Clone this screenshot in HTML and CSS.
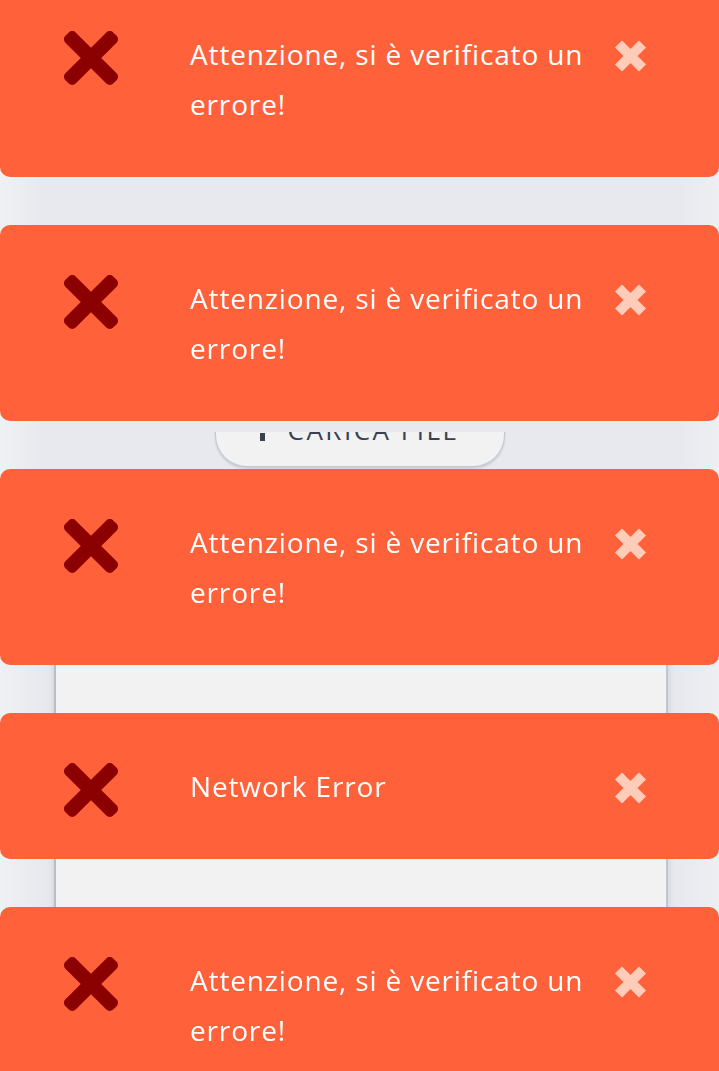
FILE: index.html
```html
<!DOCTYPE html>
<html lang="it">
<head>
  <meta charset="UTF-8">
  <meta name="viewport" content="width=device-width, initial-scale=1.0">
  <title>Carica file</title>
  <link rel="stylesheet" href="styles.css">
</head>

<body>
<div class="page">
  <div class="upload-clip">
    <div class="upload">
      <span class="upload-icon"></span>
      <span class="upload-text">CARICA FILE</span>
    </div>
  </div>
  <div class="panel"></div>
</div>

<div class="toasts">
  <div class="toast">
    <svg class="toast-icon" viewBox="0 80 352 352"><path d="M242.72 256l100.07-100.07c12.28-12.28 12.28-32.19 0-44.48l-22.24-22.24c-12.28-12.28-32.19-12.28-44.48 0L176 189.28 75.93 89.21c-12.28-12.28-32.19-12.28-44.480 0L9.21 111.45c-12.28 12.28-12.28 32.19 0 44.48L109.28 256 9.21 356.07c-12.28 12.28-12.28 32.19 0 44.48l22.24 22.24c12.28 12.28 32.2 12.28 44.48 0L176 322.72l100.07 100.07c12.28 12.28 32.2 12.28 44.48 0l22.24-22.24c12.28-12.28 12.28-32.19 0-44.48L242.72 256z"/></svg>
    <div class="toast-text">Attenzione, si è verificato un errore!</div>
    <svg class="toast-close" viewBox="0 0 32 32"><path d="M4 4L28 28M28 4L4 28"/></svg>
  </div>
  <div class="toast">
    <svg class="toast-icon" viewBox="0 80 352 352"><path d="M242.72 256l100.07-100.07c12.28-12.28 12.28-32.19 0-44.48l-22.24-22.24c-12.28-12.28-32.19-12.28-44.48 0L176 189.28 75.93 89.21c-12.28-12.28-32.19-12.28-44.480 0L9.21 111.45c-12.28 12.28-12.28 32.19 0 44.48L109.28 256 9.21 356.07c-12.28 12.28-12.28 32.19 0 44.48l22.24 22.24c12.28 12.28 32.2 12.28 44.48 0L176 322.72l100.07 100.07c12.28 12.28 32.2 12.28 44.48 0l22.24-22.24c12.28-12.28 12.28-32.19 0-44.48L242.72 256z"/></svg>
    <div class="toast-text">Attenzione, si è verificato un errore!</div>
    <svg class="toast-close" viewBox="0 0 32 32"><path d="M4 4L28 28M28 4L4 28"/></svg>
  </div>
  <div class="toast">
    <svg class="toast-icon" viewBox="0 80 352 352"><path d="M242.72 256l100.07-100.07c12.28-12.28 12.28-32.19 0-44.48l-22.24-22.24c-12.28-12.28-32.19-12.28-44.48 0L176 189.28 75.93 89.21c-12.28-12.28-32.19-12.28-44.480 0L9.21 111.45c-12.28 12.28-12.28 32.19 0 44.48L109.28 256 9.21 356.07c-12.28 12.28-12.28 32.19 0 44.48l22.24 22.24c12.28 12.28 32.2 12.28 44.48 0L176 322.72l100.07 100.07c12.28 12.28 32.2 12.28 44.48 0l22.24-22.24c12.28-12.28 12.28-32.19 0-44.48L242.72 256z"/></svg>
    <div class="toast-text">Attenzione, si è verificato un errore!</div>
    <svg class="toast-close" viewBox="0 0 32 32"><path d="M4 4L28 28M28 4L4 28"/></svg>
  </div>
  <div class="toast">
    <svg class="toast-icon" viewBox="0 80 352 352"><path d="M242.72 256l100.07-100.07c12.28-12.28 12.28-32.19 0-44.48l-22.24-22.24c-12.28-12.28-32.19-12.28-44.48 0L176 189.28 75.93 89.21c-12.28-12.28-32.19-12.28-44.480 0L9.21 111.45c-12.28 12.28-12.28 32.19 0 44.48L109.28 256 9.21 356.07c-12.28 12.28-12.28 32.19 0 44.48l22.24 22.24c12.28 12.28 32.2 12.28 44.48 0L176 322.72l100.07 100.07c12.28 12.28 32.2 12.28 44.48 0l22.24-22.24c12.28-12.28 12.28-32.19 0-44.48L242.72 256z"/></svg>
    <div class="toast-text">Network Error</div>
    <svg class="toast-close" viewBox="0 0 32 32"><path d="M4 4L28 28M28 4L4 28"/></svg>
  </div>
  <div class="toast">
    <svg class="toast-icon" viewBox="0 80 352 352"><path d="M242.72 256l100.07-100.07c12.28-12.28 12.28-32.19 0-44.48l-22.24-22.24c-12.28-12.28-32.19-12.28-44.48 0L176 189.28 75.93 89.21c-12.28-12.28-32.19-12.28-44.480 0L9.21 111.45c-12.28 12.28-12.28 32.19 0 44.48L109.28 256 9.21 356.07c-12.28 12.28-12.28 32.19 0 44.48l22.24 22.24c12.28 12.28 32.2 12.28 44.48 0L176 322.72l100.07 100.07c12.28 12.28 32.2 12.28 44.48 0l22.24-22.24c12.28-12.28 12.28-32.19 0-44.48L242.72 256z"/></svg>
    <div class="toast-text">Attenzione, si è verificato un errore!</div>
    <svg class="toast-close" viewBox="0 0 32 32"><path d="M4 4L28 28M28 4L4 28"/></svg>
  </div>
</div>
</body>
</html>
```

FILE: styles.css
```css
* {
  padding: 0;
  margin: 0;
  box-sizing: border-box;
}

html, body {
  height: 100%;
  overflow: hidden;
}

body {
  font-family: "Open Sans", "Liberation Sans", sans-serif;
  background: linear-gradient(90deg, #f0f1f4 0%, #e8e9ee 6%, #e8e9ee 94%, #eeeff3 100%);
}

.page {
  padding-top: 432px;
}

.upload-clip {
  height: 37px;
  overflow: hidden;
}

.upload {
  width: 290px;
  height: 74px;
  margin: -39px auto 0;
  border: 1px solid #c3c7cf;
  border-radius: 32px;
  background: #f2f2f3;
  box-shadow: 0 2px 2px rgba(120, 128, 145, 0.25);
  display: flex;
  align-items: center;
  justify-content: center;
  gap: 23px;
  color: #3b4050;
}

.upload-icon {
  width: 5px;
  height: 8px;
  margin-top: 14px;
  background: #3b4050;
}

.upload-text {
  font-size: 26px;
  letter-spacing: 2.5px;
}

.panel {
  height: 700px;
  margin: 53px 51px 0 54px;
  background: #f2f2f2;
  border-left: 2px solid #babdc3;
  border-right: 2px solid #c3c6cc;
  box-shadow: 0 0 6px rgba(140, 146, 160, 0.35);
}

.toasts {
  position: fixed;
  top: -19px;
  left: 0;
  width: 100%;
  display: flex;
  flex-direction: column;
  gap: 48px;
}

.toast {
  display: flex;
  align-items: flex-start;
  padding: 48px 0;
  background: #ff613a;
  border-radius: 10px;
  color: #fff;
}

.toast-icon {
  flex: none;
  width: 54px;
  height: 54px;
  margin: 2px 0 -6px 64px;
  fill: #8b0000;
}

.toast-text {
  flex: 1;
  margin: 0 20px 0 72px;
  font-size: 28px;
  line-height: 50px;
  letter-spacing: 0.85px;
}

.toast-close {
  flex: none;
  width: 33px;
  height: 32px;
  margin: 11px 72px 0 0;
  fill: none;
  stroke: #ffccba;
  stroke-width: 10;
}
```
